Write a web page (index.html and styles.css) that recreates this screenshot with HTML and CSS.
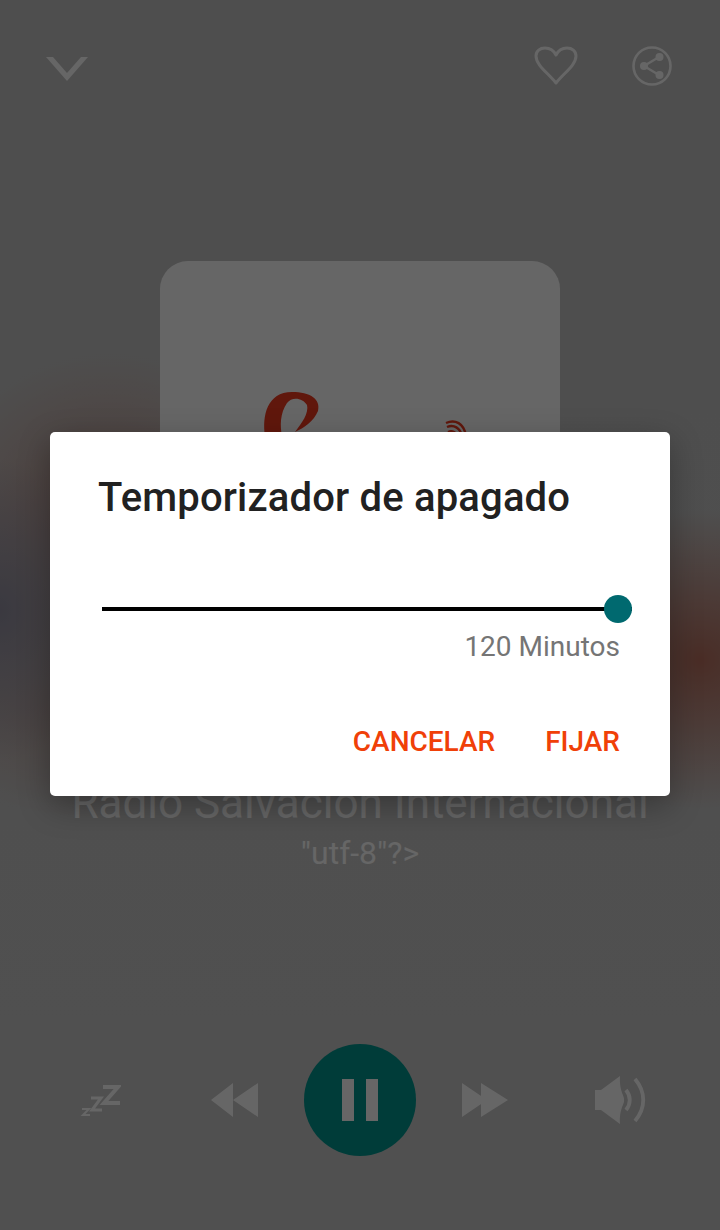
FILE: index.html
```html
<!DOCTYPE html>
<html lang="es">
<head>
    <meta charset="UTF-8">
    <meta name="viewport" content="width=device-width, initial-scale=1.0">
    <title>Radio Salvación Internacional</title>
    <link rel="stylesheet" href="styles.css">
</head>
<body>
    <main class="player">
        <header class="top-bar">
            <svg class="icon-down" width="44" height="26" viewBox="0 0 44 26">
                <path d="M0 0 H7 L21 16 L35 0 H42 L21 24 Z" fill="#fff"/>
            </svg>
            <div class="top-actions">
                <svg width="44" height="40" viewBox="0 0 44 40">
                    <path d="M22 37 C14 27 2 19 2 10 C2 5 6 2 11 2 C16 2 20 5 22 9 C24 5 28 2 33 2 C38 2 42 5 42 10 C42 19 30 27 22 37 Z" fill="none" stroke="#fff" stroke-width="3" stroke-linejoin="round"/>
                </svg>
                <svg width="40" height="40" viewBox="0 0 40 40">
                    <circle cx="20" cy="20" r="18.5" fill="none" stroke="#fff" stroke-width="2.6"/>
                    <path d="M27 11 L12 20 L27 29" fill="none" stroke="#fff" stroke-width="2.4"/>
                    <circle cx="27.5" cy="11" r="4" fill="#fff"/>
                    <circle cx="12" cy="20" r="4" fill="#fff"/>
                    <circle cx="27.5" cy="29" r="4" fill="#fff"/>
                </svg>
            </div>
        </header>

        <div class="cover">
            <svg class="logo" width="400" height="400" viewBox="0 0 400 400">
                <path d="M105 175 C102 155 107 131 132 131 C150 131 161 138 158 150 C154 160 144 167 135 171 C142 162 149 152 147 144 C143 137 132 135 127 142 C120 152 120 165 122 175 Z" fill="#f03a20"/>
                <g fill="none" stroke="#f03a20" stroke-width="2.4">
                    <path d="M286 162 C295 158 304 162 306 175"/>
                    <path d="M287 166 C294 163 300 167 302 175"/>
                    <path d="M288 171 C292 169 296 171 298 175"/>
                </g>
            </svg>
        </div>

        <h1 class="station">Radio Salvación Internacional</h1>
        <p class="track">"utf-8"?&gt;</p>

        <footer class="controls">
            <svg width="42" height="34" viewBox="0 0 42 34">
                <g fill="none" stroke="#fff" stroke-linejoin="miter">
                    <path d="M24 4 H39 L25 20 H41" stroke-width="4"/>
                    <path d="M12 15 H22 L13 27 H23" stroke-width="3"/>
                    <path d="M3 26 H10 L4 32 H11" stroke-width="2"/>
                </g>
            </svg>
            <svg class="icon-rew" width="48" height="36" viewBox="0 0 48 36">
                <path d="M0 18 L22 1 V35 Z M22 18 L47 1 V35 Z" fill="#fff"/>
            </svg>
            <div class="pause-btn">
                <span class="pause-bar"></span>
                <span class="pause-bar"></span>
            </div>
            <svg class="icon-fwd" width="48" height="36" viewBox="0 0 48 36">
                <path d="M1 1 L26 18 L1 35 Z M20 1 L47 18 L20 35 Z" fill="#fff"/>
            </svg>
            <svg width="52" height="48" viewBox="0 0 52 48">
                <path d="M0 14 H6 L25 0 C24 16 30 20 29 24 C30 28 24 32 25 48 L6 34 H0 Z" fill="#fff"/>
                <g fill="none" stroke="#fff" stroke-width="3.8">
                    <path d="M31 14 C36 20 36 28 31 34"/>
                    <path d="M40 3 C51 16 51 32 40 45"/>
                </g>
            </svg>
        </footer>
    </main>

    <div class="scrim">
        <section class="dialog">
            <h2 class="dialog-title">Temporizador de apagado</h2>
            <div class="slider">
                <div class="slider-track"></div>
                <div class="slider-thumb"></div>
            </div>
            <div class="slider-value">120 Minutos</div>
            <div class="dialog-actions">
                <button class="dialog-btn">CANCELAR</button>
                <button class="dialog-btn">FIJAR</button>
            </div>
        </section>
    </div>
</body>
</html>
```

FILE: styles.css
```css
* {
    box-sizing: border-box;
}

html, body {
    margin: 0;
    height: 1230px;
    overflow: hidden;
}

body {
    font-family: Roboto, "Liberation Sans", sans-serif;
    position: relative;
}

.player {
    height: 1230px;
    display: flex;
    flex-direction: column;
    align-items: center;
    background-image:
        radial-gradient(ellipse 110px 150px at 0 610px, #928fa0 0%, rgba(146, 143, 160, 0) 100%),
        radial-gradient(ellipse 180px 170px at 110px 520px, #bd958c 0%, rgba(189, 149, 140, 0) 100%),
        radial-gradient(ellipse 180px 120px at 90px 700px, #b8a09a 0%, rgba(184, 160, 154, 0) 100%),
        radial-gradient(ellipse 170px 150px at 700px 660px, #b8705f 0%, rgba(184, 112, 95, 0) 100%),
        linear-gradient(#c2c2c2, #c8c8c8);
}

.top-bar {
    width: 100%;
    height: 40px;
    margin-top: 46px;
    padding: 0 48px 0 46px;
    display: flex;
    justify-content: space-between;
}

.icon-down {
    margin-top: 11px;
}

.top-actions {
    display: flex;
    gap: 54px;
}

.cover {
    width: 400px;
    height: 400px;
    margin-top: 175px;
    background-color: #fff;
    border-radius: 28px;
    flex-shrink: 0;
}

.logo {
    display: block;
}

.station {
    margin: 119px 0 0;
    font-size: 44px;
    line-height: 46px;
    font-weight: 400;
    white-space: nowrap;
    color: #fff;
}

.track {
    margin: 9px 0 0;
    font-size: 32px;
    line-height: 36px;
    color: #fff;
}

.controls {
    width: 100%;
    margin-top: 173px;
    padding-left: 79px;
    display: flex;
    align-items: center;
}

.controls svg {
    flex-shrink: 0;
}

.icon-rew {
    margin-left: 90px;
}

.icon-fwd {
    margin-right: 86px;
}

.pause-btn {
    width: 112px;
    height: 112px;
    margin: 0 45px;
    border-radius: 50%;
    background-color: #00968f;
    display: flex;
    align-items: center;
    justify-content: center;
    gap: 12px;
    flex-shrink: 0;
}

.pause-bar {
    width: 12px;
    height: 42px;
    background-color: #fff;
}

.scrim {
    position: absolute;
    top: 0;
    left: 0;
    width: 720px;
    height: 1230px;
    background-color: rgba(0, 0, 0, 0.6);
}

.dialog {
    position: absolute;
    top: 432px;
    left: 50px;
    width: 620px;
    height: 364px;
    padding: 43px 50px 0 48px;
    background-color: #fff;
    border-radius: 5px;
    box-shadow: 0 10px 32px rgba(0, 0, 0, 0.3);
}

.dialog-title {
    margin: 0;
    font-size: 40px;
    line-height: 46px;
    font-weight: 500;
    letter-spacing: 0.17px;
    white-space: nowrap;
    color: #212121;
}

.slider {
    position: relative;
    height: 30px;
    margin: 73px -12px 0 4px;
    display: flex;
    align-items: center;
}

.slider-track {
    width: 100%;
    height: 4px;
    background-color: #000;
}

.slider-thumb {
    position: absolute;
    right: 0;
    top: 1px;
    width: 28px;
    height: 28px;
    border-radius: 50%;
    background-color: #00696f;
}

.slider-value {
    margin-top: 6px;
    font-size: 28px;
    line-height: 34px;
    text-align: right;
    color: #757575;
}

.dialog-actions {
    margin-top: 61px;
    display: flex;
    justify-content: flex-end;
    gap: 50px;
}

.dialog-btn {
    padding: 0;
    border: none;
    background: none;
    font-family: inherit;
    font-size: 28px;
    line-height: 34px;
    font-weight: 500;
    color: #f04008;
}
```
